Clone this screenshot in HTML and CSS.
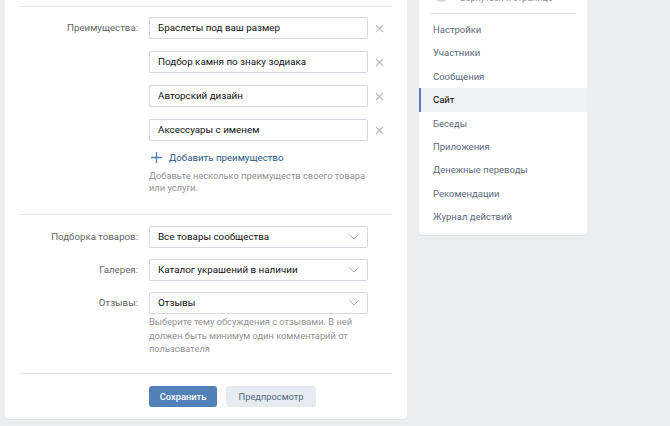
FILE: index.html
```html
<!DOCTYPE html>
<html lang="ru">
<head>
<meta charset="utf-8">
<link rel="stylesheet" href="styles.css">
</head>
<body>
<div class="page">
  <div class="card main">
    <div class="sep first"></div>
    <div class="section">
      <div class="row">
        <div class="label">Преимущества:</div>
        <div class="field"><div class="input">Браслеты под ваш размер</div></div>
        <div class="remove"><svg width="9" height="9" viewBox="0 0 9 9"><path d="M1 1L8 8M8 1L1 8" stroke="#b9bfc6" stroke-width="1.2"/></svg></div>
      </div>
      <div class="row">
        <div class="label"></div>
        <div class="field"><div class="input">Подбор камня по знаку зодиака</div></div>
        <div class="remove"><svg width="9" height="9" viewBox="0 0 9 9"><path d="M1 1L8 8M8 1L1 8" stroke="#b9bfc6" stroke-width="1.2"/></svg></div>
      </div>
      <div class="row">
        <div class="label"></div>
        <div class="field"><div class="input">Авторский дизайн</div></div>
        <div class="remove"><svg width="9" height="9" viewBox="0 0 9 9"><path d="M1 1L8 8M8 1L1 8" stroke="#b9bfc6" stroke-width="1.2"/></svg></div>
      </div>
      <div class="row">
        <div class="label"></div>
        <div class="field"><div class="input">Аксессуары с именем</div></div>
        <div class="remove"><svg width="9" height="9" viewBox="0 0 9 9"><path d="M1 1L8 8M8 1L1 8" stroke="#b9bfc6" stroke-width="1.2"/></svg></div>
      </div>
      <div class="row extra">
        <div class="label"></div>
        <div class="field">
          <div class="add"><svg width="11" height="11" viewBox="0 0 11 11"><path d="M5.5 0V11M0 5.5H11" stroke="#5181b8" stroke-width="1.3"/></svg><span>Добавить преимущество</span></div>
          <div class="hint">Добавьте несколько преимуществ своего товара или услуги.</div>
        </div>
      </div>
    </div>
    <div class="sep"></div>
    <div class="section selects">
      <div class="row">
        <div class="label">Подборка товаров:</div>
        <div class="field"><div class="input select">Все товары сообщества<svg class="chev" width="10" height="6" viewBox="0 0 10 6"><path d="M0.5 0.5L5 5L9.5 0.5" fill="none" stroke="#aab1ba" stroke-width="1"/></svg></div></div>
      </div>
      <div class="row">
        <div class="label">Галерея:</div>
        <div class="field"><div class="input select">Каталог украшений в наличии<svg class="chev" width="10" height="6" viewBox="0 0 10 6"><path d="M0.5 0.5L5 5L9.5 0.5" fill="none" stroke="#aab1ba" stroke-width="1"/></svg></div></div>
      </div>
      <div class="row">
        <div class="label">Отзывы:</div>
        <div class="field">
          <div class="input select">Отзывы<svg class="chev" width="10" height="6" viewBox="0 0 10 6"><path d="M0.5 0.5L5 5L9.5 0.5" fill="none" stroke="#aab1ba" stroke-width="1"/></svg></div>
          <div class="hint hint2">Выберите тему обсуждения с отзывами. В ней должен быть минимум один комментарий от пользователя</div>
        </div>
      </div>
    </div>
    <div class="sep"></div>
    <div class="buttons">
      <button class="btn primary">Сохранить</button>
      <button class="btn secondary">Предпросмотр</button>
    </div>
  </div>
  <div class="card side">
    <div class="owner">
      <div class="avatar"></div>
      <div class="owner-text">Вернуться к странице</div>
    </div>
    <div class="side-sep"></div>
    <ul class="menu">
      <li>Настройки</li>
      <li>Участники</li>
      <li>Сообщения</li>
      <li class="active">Сайт</li>
      <li>Беседы</li>
      <li>Приложения</li>
      <li>Денежные переводы</li>
      <li>Рекомендации</li>
      <li>Журнал действий</li>
    </ul>
  </div>
</div>
</body>
</html>
```
FILE: styles.css
```css
* { box-sizing: border-box; }
html, body { margin: 0; padding: 0; }
body {
  background: #edeef0;
  font-family: Roboto, "Open Sans", "Liberation Sans", sans-serif;
  font-size: 9.7px;
  color: #000;
  overflow: hidden;
  height: 426px;
}
.page {
  display: flex;
  align-items: flex-start;
  gap: 12px;
  padding-left: 5px;
}
.card {
  background: #fff;
  border-radius: 0 0 4px 4px;
  box-shadow: 0 1px 0 0 #dfe2e6;
}
.main {
  width: 402px;
  padding: 6px 15px 12px 14px;
}
.sep {
  height: 1px;
  background: #e7e8ec;
}
.section {
  padding: 10px 0 20px;
  display: flex;
  flex-direction: column;
  gap: 12px;
}
.section.selects {
  padding-top: 11px;
  padding-bottom: 17px;
  gap: 11px;
}
.row {
  display: flex;
  align-items: flex-start;
}
.label {
  width: 120px;
  flex: none;
  text-align: right;
  color: #656565;
  line-height: 22px;
  padding-right: 1px;
}
.field {
  width: 219px;
  margin-left: 10px;
  flex: none;
}
.input {
  height: 22px;
  border: 1px solid #d3d9de;
  border-radius: 2px;
  padding: 0 8px;
  line-height: 20px;
  color: #111;
  font-size: 9.8px;
  display: flex;
  align-items: center;
  justify-content: space-between;
}
.remove {
  width: 22px;
  height: 22px;
  display: flex;
  align-items: center;
  justify-content: center;
}
.extra { margin-top: -4px; }
.add {
  display: flex;
  align-items: center;
  gap: 7px;
  color: #2a5885;
  height: 16px;
  padding-left: 2px;
}
.hint {
  color: #939393;
  font-size: 9.3px;
  line-height: 12px;
  margin-top: 5px;
  padding-right: 2px;
}
.hint2 {
  line-height: 13.5px;
  margin-top: 1px;
}
.buttons {
  display: flex;
  gap: 9px;
  padding: 12px 0 0 130px;
}
.btn {
  font-family: inherit;
  font-size: 9.3px;
  height: 21px;
  border: none;
  border-radius: 3px;
  padding: 0;
  cursor: pointer;
}
.primary {
  background: #5181b8;
  color: #fff;
  font-weight: 500;
  width: 68px;
}
.secondary {
  background: #e5ebf1;
  color: #55677d;
  width: 90px;
}
.side {
  width: 168px;
  margin-top: -28px;
  padding-bottom: 6px;
}
.owner {
  display: flex;
  align-items: center;
  gap: 10px;
  padding: 0 14px;
  height: 33px;
}
.avatar {
  width: 17px;
  height: 17px;
  border-radius: 50%;
  background: #d7d8db;
  margin-top: 10px;
}
.owner-text {
  color: #939393;
  font-size: 9px;
  margin-top: 18px;
}
.side-sep {
  height: 1px;
  background: #e7e8ec;
  margin: 8px 11px 4px;
}
.menu {
  list-style: none;
  margin: 0;
  padding: 0;
}
.menu li {
  height: 23.4px;
  line-height: 23.4px;
  padding-left: 12px;
  color: #5b6a7d;
  font-size: 9.5px;
  border-left: 2px solid transparent;
}
.menu li.active {
  background: #f0f2f5;
  border-left-color: #5181b8;
  color: #000;
}
```
